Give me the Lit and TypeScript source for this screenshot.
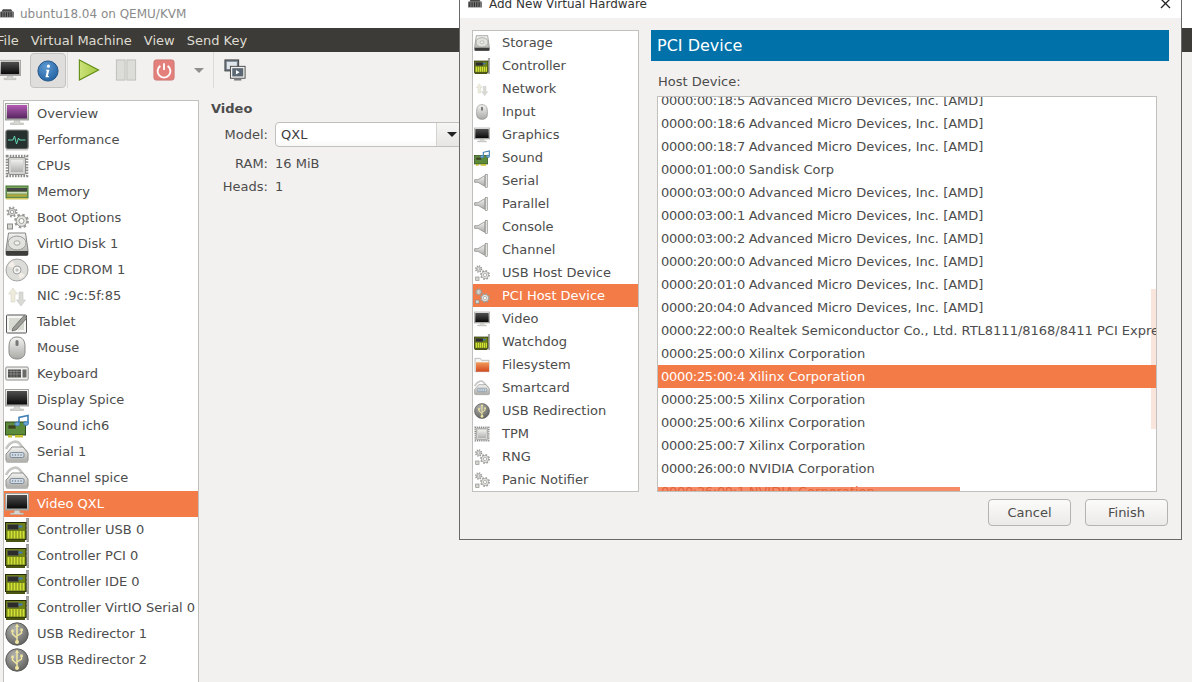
import { LitElement, html, css, svg } from "lit";
import { customElement, property } from "lit/decorators.js";

const silver = svg`<linearGradient id="s" x1="0" y1="0" x2="0" y2="1"><stop offset="0" stop-color="#f4f4f2"/><stop offset="1" stop-color="#a9a9a6"/></linearGradient>`;

function gear(cx: number, cy: number, r: number) {
  const c = 2 * Math.PI * r;
  return svg`<circle cx=${cx} cy=${cy} r=${r} fill="none" stroke="#9c9c98" stroke-width="2.8" stroke-dasharray=${`${c / 16} ${c / 16}`}/>
    <circle cx=${cx} cy=${cy} r=${r - 0.6} fill="#e4e4e1" stroke="#8a8a86" stroke-width=".8"/>
    <circle cx=${cx} cy=${cy} r=${r * 0.42} fill="#f8f8f6" stroke="#8a8a86" stroke-width=".8"/>`;
}

const gears = svg`${gear(7, 6, 4.2)}${gear(16.5, 15, 6)}
  <rect x="2.5" y="18" width="5" height="5" fill="#d6d6d3" stroke="#8a8a86"/>`;

const monitor = (screen: string) => svg`
  <defs>${silver}<linearGradient id="m" x1="0" y1="0" x2="0" y2="1">${
    screen === "purple"
      ? svg`<stop offset="0" stop-color="#b45ab4"/><stop offset="1" stop-color="#55265f"/>`
      : svg`<stop offset="0" stop-color="#505050"/><stop offset="1" stop-color="#0a0a0a"/>`
  }</linearGradient></defs>
  <rect x=".5" y="1.5" width="23" height="16.5" fill="url(#s)" stroke="#a3a3a0"/>
  <rect x="2" y="3" width="20" height="13.5" fill="url(#m)"/>
  <path d="M9.5 18.5h5l.5 2.5h3.5v1.5h-13V21H9z" fill="#d5d5d2" stroke="#a8a8a5" stroke-width=".5"/>`;

const chip = svg`<defs>${silver}</defs>
  <rect x="2" y="2" width="20" height="20" fill="none" stroke="#8c8c89" stroke-width="2.6" stroke-dasharray="1.6 1.2"/>
  <rect x="3.5" y="3.5" width="17" height="17" rx="1.5" fill="#d4d4d1" stroke="#777" stroke-width=".8"/>
  <rect x="6" y="6" width="12" height="12" fill="url(#s)" opacity=".8"/>`;

const card = svg`
  <path d="M21.5 0h2v24h-1.5v-3h-.5z" fill="#a8a8a5" stroke="#6f6f6c" stroke-width=".5"/>
  <path d="M20 7h2v1.5h-2zM20 11h2v1.5h-2z" fill="#e6e6e3"/>
  <rect x=".5" y="4.5" width="20.5" height="17" fill="#6d8118" stroke="#23280a"/>
  <rect x="2.5" y="6.5" width="11" height="5" fill="#2c2c2a" stroke="#5c5c58" stroke-width=".5"/>
  <rect x="13.5" y="7.5" width="4" height="2" fill="#3e78b8"/>
  <path d="M3.5 13v7.5M6.5 13v7.5M9.5 13v7.5M12.5 13v7.5M15.5 13v7.5M18.5 13v7.5" stroke="#d2df34" stroke-width="2"/>
  <path d="M1 21.5h19V24H1z" fill="#4a5512"/>`;

const sound = svg`
  <rect x=".5" y="8" width="20" height="13" fill="#5a8a3a" stroke="#2e4c1b"/>
  <rect x="3" y="11" width="8" height="4" fill="#38451d" stroke="#7e9460" stroke-width=".5"/>
  <path d="M3 21h4v2.5H3zM10 21h8v2.5h-8z" fill="#c6bf32"/>
  <path d="M14 9.5V3.5l9-2v8" fill="none" stroke="#3f7fb5" stroke-width="1.6"/>
  <ellipse cx="12.2" cy="10" rx="2.4" ry="1.9" fill="#72a7d3" stroke="#3f7fb5"/>
  <ellipse cx="21" cy="9.5" rx="2.4" ry="1.9" fill="#72a7d3" stroke="#3f7fb5"/>`;

const connector = svg`<defs>${silver}</defs>
  <path d="M1 9C5 1 12 0 15 4s5 7 7 8" fill="none" stroke="#c6c6c3" stroke-width="2.6"/>
  <path d="M3 12 7 7h11l5 6v7a2 2 0 0 1-2 2H3a2 2 0 0 1-2-2v-6z" fill="url(#s)" stroke="#8e8e8b"/>
  <rect x="5" y="12.5" width="14" height="5" rx="1.5" fill="#d0dbe6" stroke="#6c7a88" stroke-width=".8"/>
  <path d="M7 15h10" stroke="#53616e" stroke-width="1.2" stroke-dasharray="1.2 1.6"/>
  <path d="M1 20h22v2.5H1z" fill="#b2b2af"/>`;

const horn = svg`<defs>${silver}</defs>
  <path d="M1 10h5l10-6v16L6 14H1z" fill="url(#s)" stroke="#7f7f7c"/>
  <rect x="17" y="2" width="3" height="20" fill="#e3e3e0" stroke="#7a7a77" stroke-width=".8"/>`;

const usb = svg`<defs><radialGradient id="u" cx=".4" cy=".3" r=".8"><stop offset="0" stop-color="#b4b4b1"/><stop offset="1" stop-color="#585856"/></radialGradient></defs>
  <circle cx="12" cy="12" r="11.2" fill="url(#u)" stroke="#5c5c5a"/>
  <path d="M12 3v17M12 16 7.5 12V9.5M12 14l4.5-3V8.5" fill="none" stroke="#f0e6a0" stroke-width="1.5"/>
  <path d="M12 1.5 14 5h-4z" fill="#f0e6a0"/><circle cx="12" cy="20" r="2" fill="#f0e6a0"/>
  <circle cx="7.5" cy="9" r="1.4" fill="#f0e6a0"/><rect x="15.3" y="6.5" width="2.5" height="2.5" fill="#f0e6a0"/>`;

const ICONS: Record<string, unknown> = {
  overview: monitor("purple"),
  display: monitor("black"),
  perf: svg`<rect x=".8" y="2" width="22.4" height="19" rx="2" fill="#26302f" stroke="#8a8a87" stroke-width="1.2"/>
    <path d="M3 12h5l1.5-4 2 8 2-6 1 2h6" fill="none" stroke="#62d8b4" stroke-width="1"/>
    <path d="M1 21h22v1.5H1z" fill="#c9c9c6"/>`,
  chip,
  memory: svg`<rect x="1" y="6" width="22" height="12" fill="#79a85c" stroke="#49703a"/>
    <path d="M2 8h20v3.5H2z" fill="#444"/><path d="M2 12h20v1.5H2z" fill="#cfd8b8"/>
    <path d="M2 14.5h20v2H2z" fill="#b6a53a"/><path d="M1 18h22v1.5H1z" fill="#d1c65c"/>`,
  gears,
  disk: svg`<defs>${silver}</defs>
    <path d="M3.5 1h17l2.5 17v4a1.5 1.5 0 0 1-1.5 1.5h-19A1.5 1.5 0 0 1 1 22v-4z" fill="url(#s)" stroke="#858582"/>
    <ellipse cx="12" cy="11" rx="9" ry="7" fill="#e2e2df" stroke="#9c9c99"/>
    <ellipse cx="12" cy="11" rx="3" ry="2.2" fill="#f1f1ef" stroke="#a5a5a2"/>
    <path d="M1 19h22v3.5a1 1 0 0 1-1 1H2a1 1 0 0 1-1-1z" fill="#3d3d3b"/>`,
  cdrom: svg`<circle cx="12" cy="12" r="11" fill="#dcdcd9" stroke="#a5a5a2"/>
    <path d="M12 12 3 8a10 10 0 0 1 5-5zM12 12l8 5a10 10 0 0 1-5 4z" fill="#f3eee8"/>
    <circle cx="12" cy="12" r="4" fill="#f3f3f1" stroke="#a2a2a0"/><circle cx="12" cy="12" r="1.6" fill="#bdbdba"/>`,
  net: svg`<path d="M8 4 3.5 10H6v8h4v-8h2.5z" fill="#ecebdc" stroke="#d6d5c6" stroke-width=".6"/>
    <path d="M15 22l4.5-6H17V8h-4v8h-2.5z" transform="translate(1 0)" fill="#d9d9d6" stroke="#c6c6c3" stroke-width=".6"/>`,
  tablet: svg`<rect x="1.5" y="5" width="20" height="18" rx="1" fill="#f6f6f4" stroke="#555"/>
    <rect x="4" y="8" width="15" height="12" fill="#d7dbd2"/>
    <path d="M8 18 19 5.5l3 2.5L11 20l-4 1z" fill="#9b9b98" stroke="#5a5a58" stroke-width=".7"/>`,
  mouse: svg`<defs>${silver}</defs><path d="M12 1c6 0 8 4 8 10v5c0 5-4 7-8 7s-8-2-8-7v-5C4 5 6 1 12 1z" fill="url(#s)" stroke="#8b8b88"/>
    <rect x="10.5" y="4" width="3" height="6" rx="1.5" fill="#777"/>`,
  keyboard: svg`<rect x=".8" y="5" width="22.4" height="13" rx="1" fill="#efefed" stroke="#8e8e8b"/>
    <rect x="3" y="7.5" width="13" height="8" fill="#4d4d4b"/><path d="M3 9.5h13M3 12h13M6 7.5v8M9 7.5v8M12 7.5v8" stroke="#aaa" stroke-width=".5"/>
    <rect x="17.5" y="7.5" width="4" height="8" fill="#6a6a68"/>`,
  sound,
  connector,
  card,
  usb,
  horn,
  folder: svg`<path d="M1.5 2h8l2 3h11v17h-21z" fill="#f5f5f3" stroke="#a5a5a2"/>
    <defs><linearGradient id="f" x1="0" y1="0" x2="0" y2="1"><stop offset="0" stop-color="#f29a5c"/><stop offset="1" stop-color="#d2481d"/></linearGradient></defs>
    <rect x="3" y="8" width="19.5" height="14" fill="url(#f)"/>`,
  info: svg`<defs><radialGradient id="i" cx=".4" cy=".3" r=".8"><stop offset="0" stop-color="#5d9ad2"/><stop offset="1" stop-color="#1f5d9e"/></radialGradient></defs>
    <circle cx="12" cy="12" r="11" fill="url(#i)" stroke="#1b4f86"/>
    <path d="M10 10.5h3.5l-1.7 7h1.4l-.3 1.2H9.2l1.6-7H9.8zM12.5 5a1.7 1.7 0 1 1 0 3.4 1.7 1.7 0 0 1 0-3.4z" fill="#fff"/>`,
  play: svg`<defs><linearGradient id="p" x1="0" y1="0" x2="1" y2="0"><stop offset="0" stop-color="#cde27c"/><stop offset="1" stop-color="#a5c83f"/></linearGradient></defs>
    <path d="M1.5 1 22.5 12 1.5 23z" fill="url(#p)" stroke="#5f8c12" stroke-width="1.2"/>`,
  pause: svg`<rect x="1.5" y="1" width="9.5" height="22" fill="#dcdcd9" stroke="#bcbcb9"/><rect x="13" y="1" width="9.5" height="22" fill="#dcdcd9" stroke="#bcbcb9"/>`,
  power: svg`<rect x="1" y="1" width="22" height="22" rx="2.5" fill="#e4807b" stroke="#cc7470"/>
    <path d="M8 7.5a7 7 0 1 0 8 0" fill="none" stroke="#fff" stroke-width="2"/><path d="M12 4.5v7.5" stroke="#fff" stroke-width="2"/>`,
  screens: svg`<rect x="1" y="1" width="15" height="12" fill="#6f7a85" stroke="#3f3f3f"/><rect x="3" y="3" width="11" height="8" fill="#dfe5ea"/>
    <rect x="7" y="8" width="16" height="13" fill="#f0f0ee" stroke="#444"/><rect x="9" y="10" width="12" height="9" fill="#5b6873"/>
    <path d="M13 12v5l4-2.5z" fill="#fff"/><path d="M11 22h8v1.4h-8z" fill="#666"/>`,
  vmm: svg`<rect x="0" y="8" width="24" height="10" fill="#777"/>
    <path d="M2 8l3-4h14l3 4" fill="#4a4a48"/><path d="M3 9v8M7 9v8M11 9v8M15 9v8M19 9v8" stroke="#222" stroke-width="1.6"/>`,
};

@customElement("hw-icon")
export class HwIcon extends LitElement {
  static styles = css`
    :host {
      display: block;
      flex: none;
    }
    svg {
      display: block;
      width: 100%;
      height: 100%;
    }
  `;

  @property() name = "";

  render() {
    return html`<svg viewBox="0 0 24 24">${ICONS[this.name]}</svg>`;
  }
}

const SIDEBAR = [
  ["overview", "Overview"],
  ["perf", "Performance"],
  ["chip", "CPUs"],
  ["memory", "Memory"],
  ["gears", "Boot Options"],
  ["disk", "VirtIO Disk 1"],
  ["cdrom", "IDE CDROM 1"],
  ["net", "NIC :9c:5f:85"],
  ["tablet", "Tablet"],
  ["mouse", "Mouse"],
  ["keyboard", "Keyboard"],
  ["display", "Display Spice"],
  ["sound", "Sound ich6"],
  ["connector", "Serial 1"],
  ["connector", "Channel spice"],
  ["display", "Video QXL"],
  ["card", "Controller USB 0"],
  ["card", "Controller PCI 0"],
  ["card", "Controller IDE 0"],
  ["card", "Controller VirtIO Serial 0"],
  ["usb", "USB Redirector 1"],
  ["usb", "USB Redirector 2"],
];

const HARDWARE = [
  ["disk", "Storage"],
  ["card", "Controller"],
  ["net", "Network"],
  ["mouse", "Input"],
  ["display", "Graphics"],
  ["sound", "Sound"],
  ["horn", "Serial"],
  ["horn", "Parallel"],
  ["horn", "Console"],
  ["horn", "Channel"],
  ["gears", "USB Host Device"],
  ["gears", "PCI Host Device"],
  ["display", "Video"],
  ["card", "Watchdog"],
  ["folder", "Filesystem"],
  ["connector", "Smartcard"],
  ["usb", "USB Redirection"],
  ["chip", "TPM"],
  ["gears", "RNG"],
  ["gears", "Panic Notifier"],
];

const AMD = "Advanced Micro Devices, Inc. [AMD]";
const PCI = [
  ["0000:00:18:5", AMD],
  ["0000:00:18:6", AMD],
  ["0000:00:18:7", AMD],
  ["0000:01:00:0", "Sandisk Corp"],
  ["0000:03:00:0", AMD],
  ["0000:03:00:1", AMD],
  ["0000:03:00:2", AMD],
  ["0000:20:00:0", AMD],
  ["0000:20:01:0", AMD],
  ["0000:20:04:0", AMD],
  ["0000:22:00:0", "Realtek Semiconductor Co., Ltd. RTL8111/8168/8411 PCI Express Gigabit Ethernet Controller"],
  ["0000:25:00:0", "Xilinx Corporation"],
  ["0000:25:00:4", "Xilinx Corporation"],
  ["0000:25:00:5", "Xilinx Corporation"],
  ["0000:25:00:6", "Xilinx Corporation"],
  ["0000:25:00:7", "Xilinx Corporation"],
  ["0000:26:00:0", "NVIDIA Corporation"],
];

@customElement("add-hardware-dialog")
export class AddHardwareDialog extends LitElement {
  static styles = css`
    :host {
      display: block;
      position: absolute;
      left: 459px;
      top: -10px;
      width: 723px;
      height: 550px;
      box-sizing: border-box;
      border: 1px solid #696969;
      background: #f2f1f0;
    }
    .title {
      height: 27px;
      box-sizing: border-box;
      padding: 0 10px 2px 8px;
      background: #fff;
      display: flex;
      align-items: center;
      color: #333;
      font-size: 12px;
    }
    .title hw-icon {
      width: 14px;
      height: 14px;
      margin-right: 7px;
    }
    .title span {
      flex: 1;
    }
    .close {
      width: 11px;
      height: 11px;
    }
    .content {
      display: flex;
      gap: 12px;
      padding: 12px 11px 0 12px;
    }
    .kinds {
      width: 167px;
      height: 462px;
      box-sizing: border-box;
      border: 1px solid #c1c0bd;
      background: #fff;
      flex: none;
    }
    .kind {
      height: 23px;
      display: flex;
      align-items: center;
      gap: 12px;
      padding-left: 1px;
    }
    .kind hw-icon {
      width: 16px;
      height: 16px;
    }
    .selected {
      background: #f37b48;
      color: #fff;
    }
    .page {
      width: 518px;
      flex: none;
    }
    .banner {
      height: 31px;
      background: #0072a9;
      color: #fff;
      font-size: 16px;
      display: flex;
      align-items: center;
      padding-left: 6px;
    }
    .label {
      height: 35px;
      box-sizing: border-box;
      padding: 13px 0 0 7px;
      line-height: 16px;
    }
    .devices {
      position: relative;
      margin-left: 6px;
      width: 500px;
      height: 396px;
      box-sizing: border-box;
      border: 1px solid #c1c0bd;
      background: #fff;
      overflow: hidden;
    }
    .scrolled {
      position: relative;
      margin-top: -8px;
    }
    .device {
      height: 23px;
      line-height: 23px;
      padding-left: 3px;
      white-space: nowrap;
    }
    .addr {
      letter-spacing: -0.31px;
    }
    .clipped {
      position: relative;
      color: #e4643a;
    }
    .clipped span {
      position: relative;
    }
    .band {
      position: absolute;
      left: 0;
      top: 7px;
      width: 302px;
      height: 5px;
      background: #f68c67;
    }
    .thumb {
      position: absolute;
      right: 0;
      top: 192px;
      width: 5px;
      height: 140px;
      background: #f9e5dc;
    }
    .actions {
      display: flex;
      justify-content: flex-end;
      gap: 14px;
      margin: 7px 1px 0 0;
    }
    button {
      width: 83px;
      height: 27px;
      box-sizing: border-box;
      border: 1px solid #b4b3b0;
      border-radius: 4px;
      background: linear-gradient(#fbfbfa, #ebeae9);
      font: inherit;
      color: #4c4c4c;
      padding: 0;
    }
  `;

  render() {
    return html`
      <div class="title">
        <hw-icon name="vmm"></hw-icon>
        <span>Add New Virtual Hardware</span>
        <svg class="close" viewBox="0 0 11 11"><path d="M1 1l9 9M10 1l-9 9" stroke="#222" stroke-width="1.3" /></svg>
      </div>
      <div class="content">
        <div class="kinds">
          ${HARDWARE.map(
            ([icon, label]) => html`<div class="kind ${label === "PCI Host Device" ? "selected" : ""}">
              <hw-icon name=${icon}></hw-icon>${label}
            </div>`
          )}
        </div>
        <div class="page">
          <div class="banner">PCI Device</div>
          <div class="label">Host Device:</div>
          <div class="devices">
            <div class="thumb"></div>
            <div class="scrolled">
              ${PCI.map(
                ([addr, name]) => html`<div class="device ${addr === "0000:25:00:4" ? "selected" : ""}">
                  <span class="addr">${addr} </span>${name}
                </div>`
              )}
              <div class="device clipped">
                <div class="band"></div>
                <span><span class="addr">0000:26:00:1 </span>NVIDIA Corporation</span>
              </div>
            </div>
          </div>
          <div class="actions">
            <button>Cancel</button>
            <button>Finish</button>
          </div>
        </div>
      </div>
    `;
  }
}

@customElement("app-root")
export class AppRoot extends LitElement {
  static styles = css`
    :host {
      display: block;
      position: relative;
      height: 682px;
      overflow: hidden;
      background: #f2f1f0;
      font-family: "DejaVu Sans", sans-serif;
      font-size: 13px;
      color: #4c4c4c;
    }
    .titlebar {
      height: 28px;
      background: #fff;
      display: flex;
      align-items: center;
      color: #8a8a8a;
      font-size: 12px;
    }
    .titlebar hw-icon {
      width: 14px;
      height: 14px;
      margin-right: 6px;
    }
    .menubar {
      height: 24px;
      background: #3c3b37;
      color: #dfdbd2;
      display: flex;
      align-items: center;
      gap: 12px;
    }
    .menubar span:first-child {
      margin-left: -3px;
    }
    .toolbar {
      height: 48px;
      box-sizing: border-box;
      padding-bottom: 12px;
      display: flex;
      align-items: stretch;
    }
    .slot {
      display: flex;
      align-items: center;
      justify-content: center;
    }
    .slot hw-icon {
      width: 22px;
      height: 22px;
    }
    .slot-vm {
      width: 30px;
      justify-content: flex-start;
    }
    .slot-vm hw-icon {
      margin-left: -1px;
    }
    .active {
      width: 36px;
      margin: 1px 1px 0 0;
      box-sizing: border-box;
      border: 1px solid #c3c2bf;
      border-radius: 4px;
      background: #dfdedc;
    }
    .slot-play {
      width: 41px;
    }
    .slot-pause {
      width: 34px;
    }
    .slot-power {
      width: 42px;
    }
    .slot-drop {
      width: 28px;
    }
    .slot-screens {
      width: 42px;
    }
    .sep {
      width: 1px;
      background: #dcdbd9;
      flex: none;
    }
    .drop {
      width: 0;
      height: 0;
      border: 5px solid transparent;
      border-top: 5px solid #8f8f8c;
      border-bottom: none;
    }
    .body {
      display: flex;
      height: 582px;
    }
    .sidebar {
      width: 196px;
      margin-left: 3px;
      box-sizing: border-box;
      border: 1px solid #c1c0bd;
      border-bottom: none;
      background: #fff;
      flex: none;
    }
    .row {
      height: 26px;
      display: flex;
      align-items: center;
      gap: 8px;
      padding-left: 1px;
      white-space: nowrap;
    }
    .row hw-icon {
      width: 24px;
      height: 24px;
    }
    .row span {
      margin-bottom: 2px;
    }
    .selected {
      background: #f37b48;
      color: #fff;
    }
    .details {
      padding: 1px 0 0 12px;
    }
    h2 {
      font-size: 13px;
      font-weight: bold;
      margin: 0;
      line-height: 16px;
    }
    .form {
      display: grid;
      grid-template-columns: 57px auto;
      grid-template-rows: 30px 23px 23px;
      column-gap: 7px;
      margin-top: 5px;
      align-items: center;
    }
    .form label {
      text-align: right;
    }
    .form .model-label {
      align-self: start;
      line-height: 25px;
    }
    .combo {
      align-self: start;
      width: 192px;
      height: 25px;
      box-sizing: border-box;
      border: 1px solid #c1c0bd;
      border-radius: 4px;
      background: linear-gradient(#fff 70%, #f8f8f7);
      display: flex;
      align-items: center;
      padding-left: 5px;
      color: #3c3c3c;
    }
    .combo span {
      flex: 1;
    }
    .combo i {
      width: 30px;
      height: 100%;
      box-sizing: border-box;
      border-left: 1px solid #d4d3d0;
      background: linear-gradient(#f6f6f5, #e6e5e3);
      display: flex;
      align-items: center;
      padding-left: 10px;
    }
    .combo i::before {
      content: "";
      border: 5px solid transparent;
      border-top: 5px solid #222;
      border-bottom: none;
    }
  `;

  render() {
    return html`
      <div class="titlebar"><hw-icon name="vmm"></hw-icon>ubuntu18.04 on QEMU/KVM</div>
      <div class="menubar">
        <span>File</span><span>Virtual Machine</span><span>View</span><span>Send Key</span>
      </div>
      <div class="toolbar">
        <div class="slot slot-vm"><hw-icon name="display"></hw-icon></div>
        <div class="slot active"><hw-icon name="info"></hw-icon></div>
        <div class="sep"></div>
        <div class="slot slot-play"><hw-icon name="play"></hw-icon></div>
        <div class="slot slot-pause"><hw-icon name="pause"></hw-icon></div>
        <div class="slot slot-power"><hw-icon name="power"></hw-icon></div>
        <div class="slot slot-drop"><div class="drop"></div></div>
        <div class="sep"></div>
        <div class="slot slot-screens"><hw-icon name="screens"></hw-icon></div>
      </div>
      <div class="body">
        <div class="sidebar">
          ${SIDEBAR.map(
            ([icon, label]) => html`<div class="row ${label === "Video QXL" ? "selected" : ""}">
              <hw-icon name=${icon}></hw-icon><span>${label}</span>
            </div>`
          )}
        </div>
        <div class="details">
          <h2>Video</h2>
          <div class="form">
            <label class="model-label">Model:</label>
            <div class="combo"><span>QXL</span><i></i></div>
            <label>RAM:</label><span>16 MiB</span>
            <label>Heads:</label><span>1</span>
          </div>
        </div>
      </div>
      <add-hardware-dialog></add-hardware-dialog>
    `;
  }
}
